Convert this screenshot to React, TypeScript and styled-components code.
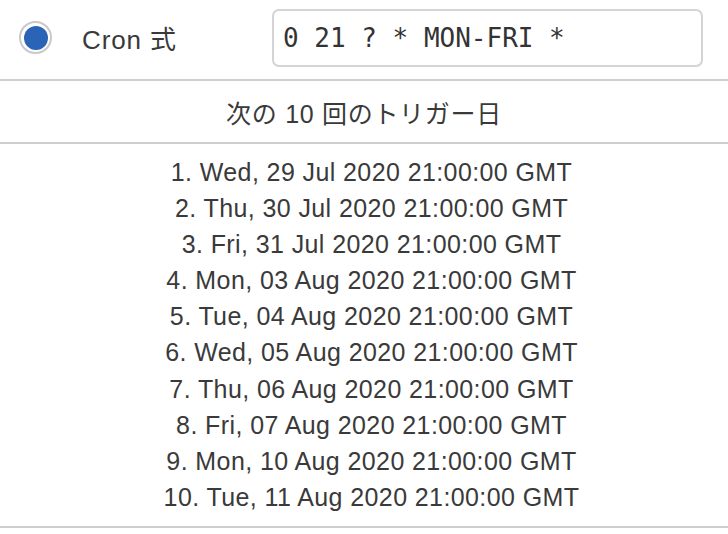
import styled, { createGlobalStyle } from 'styled-components';

const GlobalStyle = createGlobalStyle`
  html, body {
    margin: 0;
    padding: 0;
    background: #fff;
  }
  body {
    font-family: "Liberation Sans", Arial, "Noto Sans CJK JP", sans-serif;
    color: #3a3a3a;
  }
`

const dates = [
  'Wed, 29 Jul 2020 21:00:00 GMT',
  'Thu, 30 Jul 2020 21:00:00 GMT',
  'Fri, 31 Jul 2020 21:00:00 GMT',
  'Mon, 03 Aug 2020 21:00:00 GMT',
  'Tue, 04 Aug 2020 21:00:00 GMT',
  'Wed, 05 Aug 2020 21:00:00 GMT',
  'Thu, 06 Aug 2020 21:00:00 GMT',
  'Fri, 07 Aug 2020 21:00:00 GMT',
  'Mon, 10 Aug 2020 21:00:00 GMT',
  'Tue, 11 Aug 2020 21:00:00 GMT',
];

const App = () => {
  return (
    <>
      <GlobalStyle />
      <Page>
        <Header>
          <Radio>
            <Dot />
          </Radio>
          <Label>Cron 式</Label>
          <Expression value="0 21 ? * MON-FRI *" readOnly />
        </Header>
        <Title>次の 10 回のトリガー日</Title>
        <List>
          {dates.map((d, i) => (
            <Item key={d}>{i + 1}. {d}</Item>
          ))}
        </List>
      </Page>
    </>
  )
}

const Page = styled.div`
  width: 728px;
  display: flex;
  flex-direction: column;
`

const Header = styled.div`
  display: flex;
  align-items: center;
  padding: 0 25px 4px 19px;
  border-bottom: 2px solid #cfcfcf;
  box-sizing: border-box;
  height: 81px;
`

const Radio = styled.div`
  width: 33px;
  height: 33px;
  box-sizing: border-box;
  border: 2px solid #c9c9cc;
  border-radius: 50%;
  display: flex;
  align-items: center;
  justify-content: center;
  flex-shrink: 0;
`

const Dot = styled.div`
  width: 24px;
  height: 24px;
  border-radius: 50%;
  background: #2a64b7;
`

const Label = styled.div`
  font-size: 26px;
  letter-spacing: 0.9px;
  margin-left: 30px;
  width: 190px;
  flex-shrink: 0;
`

const Expression = styled.input`
  flex: 1;
  min-width: 0;
  height: 58px;
  box-sizing: border-box;
  border: 2px solid #d4d4d4;
  border-radius: 7px;
  padding: 0 9px;
  font-family: "DejaVu Sans Mono", "Liberation Mono", monospace;
  font-size: 26px;
  color: #333;
  outline: none;
  background: #fff;
`

const Title = styled.div`
  display: flex;
  align-items: center;
  justify-content: center;
  font-size: 25px;
  letter-spacing: 0.7px;
  border-bottom: 2px solid #cfcfcf;
  box-sizing: border-box;
  height: 63px;
`

const List = styled.div`
  display: flex;
  flex-direction: column;
  align-items: center;
  padding: 10px 0 11px 15px;
  border-bottom: 2px solid #cfcfcf;
`

const Item = styled.div`
  font-size: 25px;
  letter-spacing: 0.4px;
  line-height: 36.1px;
`

export default App;
